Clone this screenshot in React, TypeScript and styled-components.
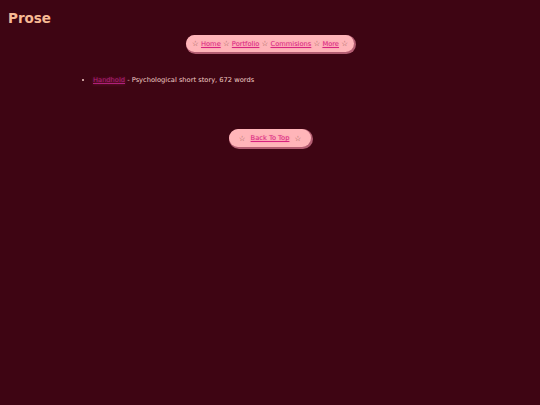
import * as React from "react";
import styled, { createGlobalStyle } from "styled-components";

const GlobalStyle = createGlobalStyle`
  html, body {
    margin: 0;
    background-color: #3e0513;
  }
  body {
    font-family: "DejaVu Sans", Verdana, sans-serif;
    font-size: 6.7px;
    color: #f4cdc7;
  }
`;

const Page = styled.div`
  min-height: 405px;
  padding: 8px;
  box-sizing: border-box;
`;

const Title = styled.h1`
  margin: 1px 0 0;
  font-size: 13.5px;
  line-height: 18px;
  font-weight: bold;
  color: #f7b994;
`;

const Pill = styled.nav<{ $pad: number; $gap: number; $height: number }>`
  display: flex;
  align-items: center;
  gap: ${(p) => p.$gap}px;
  padding: 0 ${(p) => p.$pad}px;
  height: ${(p) => p.$height}px;
  border-radius: 9px;
  background-color: #ffb5b9;
  box-shadow: 1px 1px 0 1px #b35e72;
`;

const Centered = styled.div<{ $top: number }>`
  display: flex;
  justify-content: center;
  margin-top: ${(p) => p.$top}px;
`;

const Link = styled.a`
  color: #d8237f;
  text-decoration: underline;
  text-shadow: 0 0 2px rgba(240, 90, 150, 0.45);
`;

const Star = styled.span`
  color: #8f5247;
  font-size: 7.5px;
`;

const List = styled.ul`
  margin: 24px 0 0;
  padding-left: 85px;
  list-style: disc;
  li::marker {
    color: #f4cdc7;
  }
`;

const WorkLink = styled.a`
  color: #b0207a;
  text-decoration: underline;
  text-shadow: 0 0 3px rgba(220, 60, 140, 0.5);
`;

const navItems = ["Home", "Portfolio", "Commisions", "More"];

export default function App() {
  return (
    <Page>
      <GlobalStyle />
      <Title>Prose</Title>
      <Centered $top={8}>
        <Pill $pad={6.5} $gap={2.2} $height={17}>
          <Star>☆</Star>
          {navItems.map((item) => (
            <React.Fragment key={item}>
              <Link href="#">{item}</Link>
              <Star>☆</Star>
            </React.Fragment>
          ))}
        </Pill>
      </Centered>
      <List>
        <li>
          <WorkLink href="#">Handhold</WorkLink> - Psychological short story,
          672 words
        </li>
      </List>
      <Centered $top={45}>
        <Pill $pad={10} $gap={5} $height={18}>
          <Star>☆</Star>
          <Link href="#">Back To Top</Link>
          <Star>☆</Star>
        </Pill>
      </Centered>
    </Page>
  );
}
